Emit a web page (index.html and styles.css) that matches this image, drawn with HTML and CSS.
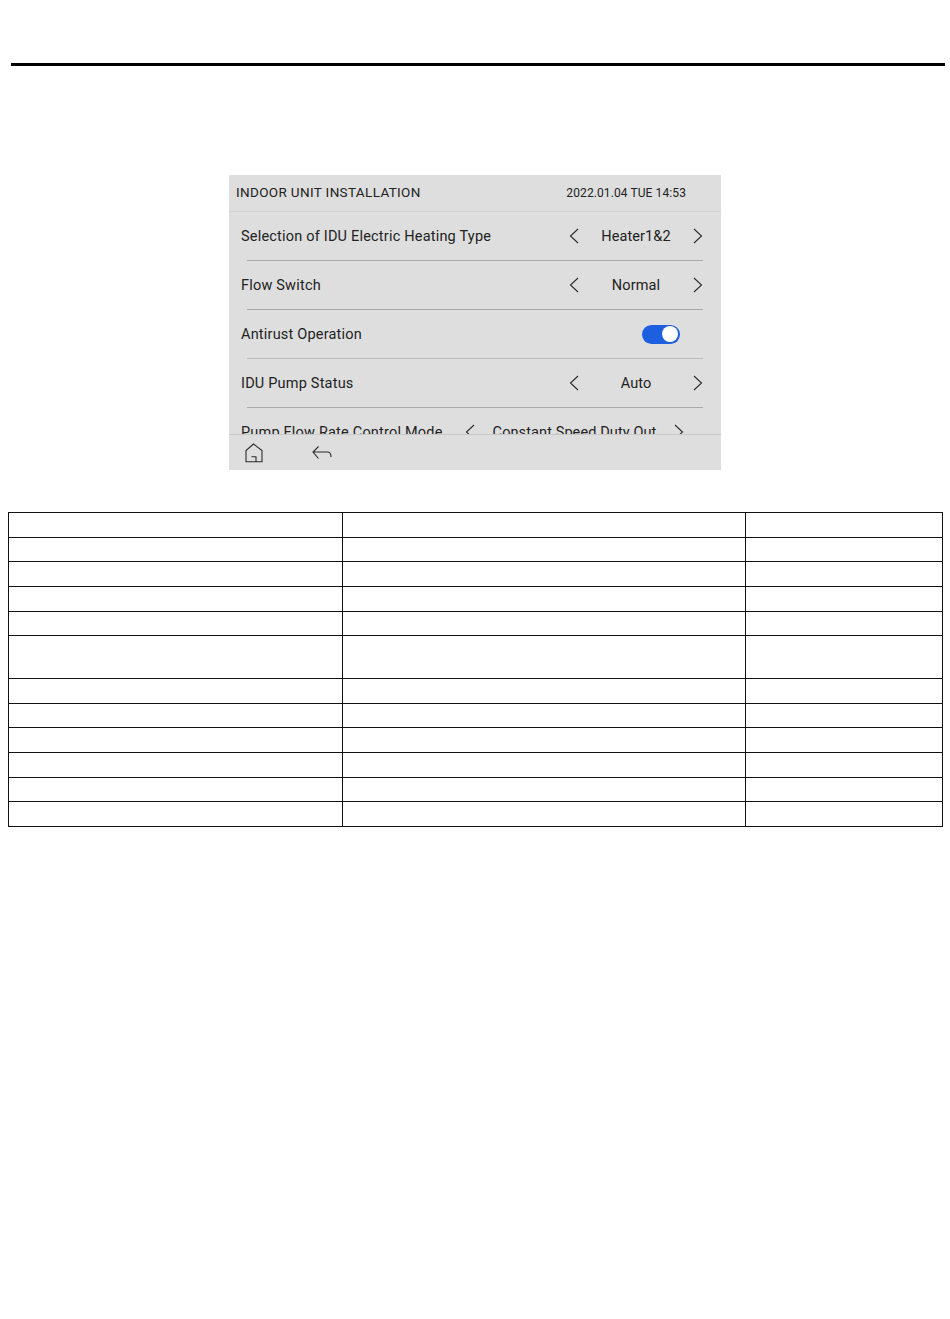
FILE: index.html
```html
<!DOCTYPE html>
<html lang="en">
<head>
  <meta charset="UTF-8">
  <title>Indoor Unit Installation</title>
  <link rel="stylesheet" href="styles.css">
</head>
<body>
  <div class="top-rule"></div>

  <div class="panel">
    <div class="panel-header">
      <span class="panel-title">INDOOR UNIT INSTALLATION</span>
      <span class="panel-date">2022.01.04 TUE 14:53</span>
    </div>

    <div class="panel-list">
      <div class="row">
        <span class="row-label">Selection of IDU Electric Heating Type</span>
        <div class="picker">
          <svg class="chevron" viewBox="0 0 10 16"><path d="M9 1 L1.5 8 L9 15"/></svg>
          <span class="picker-value">Heater1&amp;2</span>
          <svg class="chevron" viewBox="0 0 10 16"><path d="M1 1 L8.5 8 L1 15"/></svg>
        </div>
      </div>
      <div class="row">
        <span class="row-label">Flow Switch</span>
        <div class="picker">
          <svg class="chevron" viewBox="0 0 10 16"><path d="M9 1 L1.5 8 L9 15"/></svg>
          <span class="picker-value">Normal</span>
          <svg class="chevron" viewBox="0 0 10 16"><path d="M1 1 L8.5 8 L1 15"/></svg>
        </div>
      </div>
      <div class="row">
        <span class="row-label">Antirust Operation</span>
        <div class="toggle"><div class="toggle-knob"></div></div>
      </div>
      <div class="row">
        <span class="row-label">IDU Pump Status</span>
        <div class="picker">
          <svg class="chevron" viewBox="0 0 10 16"><path d="M9 1 L1.5 8 L9 15"/></svg>
          <span class="picker-value">Auto</span>
          <svg class="chevron" viewBox="0 0 10 16"><path d="M1 1 L8.5 8 L1 15"/></svg>
        </div>
      </div>
      <div class="row">
        <span class="row-label">Pump Flow Rate Control Mode</span>
        <div class="picker picker-wide">
          <svg class="chevron" viewBox="0 0 10 16"><path d="M9 1 L1.5 8 L9 15"/></svg>
          <span class="picker-value">Constant Speed Duty Out</span>
          <svg class="chevron" viewBox="0 0 10 16"><path d="M1 1 L8.5 8 L1 15"/></svg>
        </div>
      </div>
    </div>

    <div class="panel-footer">
      <svg class="icon-home" viewBox="0 0 18 20"><path d="M8.5 1 L1 7.5 V18.7 H17 V7.5 Z M6.5 13.7 H11 V18.7"/></svg>
      <svg class="icon-back" viewBox="0 0 20 13"><path d="M6.5 0.5 L1 6 L6.5 12.5 M1 6 H15.5 Q19 6 19 11"/></svg>
    </div>
  </div>

  <table class="blank-table">
    <tr class="h25"><td class="col1"></td><td class="col2"></td><td class="col3"></td></tr>
    <tr class="h24"><td></td><td></td><td></td></tr>
    <tr class="h25"><td></td><td></td><td></td></tr>
    <tr class="h25"><td></td><td></td><td></td></tr>
    <tr class="h24"><td></td><td></td><td></td></tr>
    <tr class="h43"><td></td><td></td><td></td></tr>
    <tr class="h25"><td></td><td></td><td></td></tr>
    <tr class="h24"><td></td><td></td><td></td></tr>
    <tr class="h25"><td></td><td></td><td></td></tr>
    <tr class="h25"><td></td><td></td><td></td></tr>
    <tr class="h24"><td></td><td></td><td></td></tr>
    <tr class="h25"><td></td><td></td><td></td></tr>
  </table>
</body>
</html>
```

FILE: styles.css
```css
body {
  margin: 0;
  background-color: #fff;
  font-family: Roboto, "Liberation Sans", sans-serif;
  color: #222;
}
.top-rule {
  margin: 63px 0 0 11px;
  width: 934px;
  height: 3px;
  background-color: #000;
}
.panel {
  margin: 109px auto 0;
  width: 492px;
  height: 295px;
  background-color: #dedede;
  display: flex;
  flex-direction: column;
}
.panel-header {
  height: 35px;
  border-bottom: 1px solid #d4d4d4;
  padding: 0 35px 1px 7px;
  display: flex;
  align-items: center;
  justify-content: space-between;
}
.panel-title {
  margin-bottom: 2px;
  font-size: 13.5px;
  letter-spacing: 0.35px;
}
.panel-date {
  font-size: 12px;
  letter-spacing: 0.1px;
}
.panel-list {
  height: 222px;
  overflow: hidden;
}
.row {
  height: 48px;
  margin: 0 18px;
  border-bottom: 1px solid #a9a9a9;
  display: flex;
  align-items: center;
  justify-content: space-between;
}
.row:nth-child(3) {
  border-bottom-color: #bdbdbd;
}
.row:last-child {
  border-bottom: none;
}
.row-label {
  margin-left: -6px;
  font-size: 14.5px;
  letter-spacing: 0.2px;
  white-space: nowrap;
}
.picker {
  width: 134px;
  display: flex;
  align-items: center;
  justify-content: space-between;
}
.picker-wide {
  width: 219px;
  margin-right: 19px;
}
.picker-value {
  font-size: 14.5px;
  letter-spacing: 0.1px;
  white-space: nowrap;
}
.chevron {
  width: 10px;
  height: 16px;
}
.chevron path,
.icon-home path,
.icon-back path {
  fill: none;
  stroke: #2a2a2a;
  stroke-width: 1.1;
}
.toggle {
  width: 36px;
  height: 19px;
  margin-right: 23px;
  border-radius: 10px;
  background-color: #1d5fe0;
  display: flex;
  align-items: center;
  justify-content: flex-end;
  padding-right: 2px;
}
.toggle-knob {
  width: 16px;
  height: 16px;
  border-radius: 50%;
  background-color: #fff;
}
.panel-footer {
  height: 35px;
  border-top: 1px solid #c8c8c8;
  padding-left: 16px;
  display: flex;
  align-items: center;
  gap: 49px;
}
.icon-home {
  width: 18px;
  height: 20px;
}
.icon-back {
  width: 20px;
  height: 13px;
}
.blank-table {
  margin: 42px 0 0 8px;
  width: 935px;
  border-collapse: collapse;
  table-layout: fixed;
}
.blank-table td {
  border: 1px solid #111;
  padding: 0;
}
.col1 { width: 333px; }
.col2 { width: 402px; }
.col3 { width: 196px; }
.h24 { height: 24px; }
.h25 { height: 25px; }
.h43 { height: 43px; }
```
